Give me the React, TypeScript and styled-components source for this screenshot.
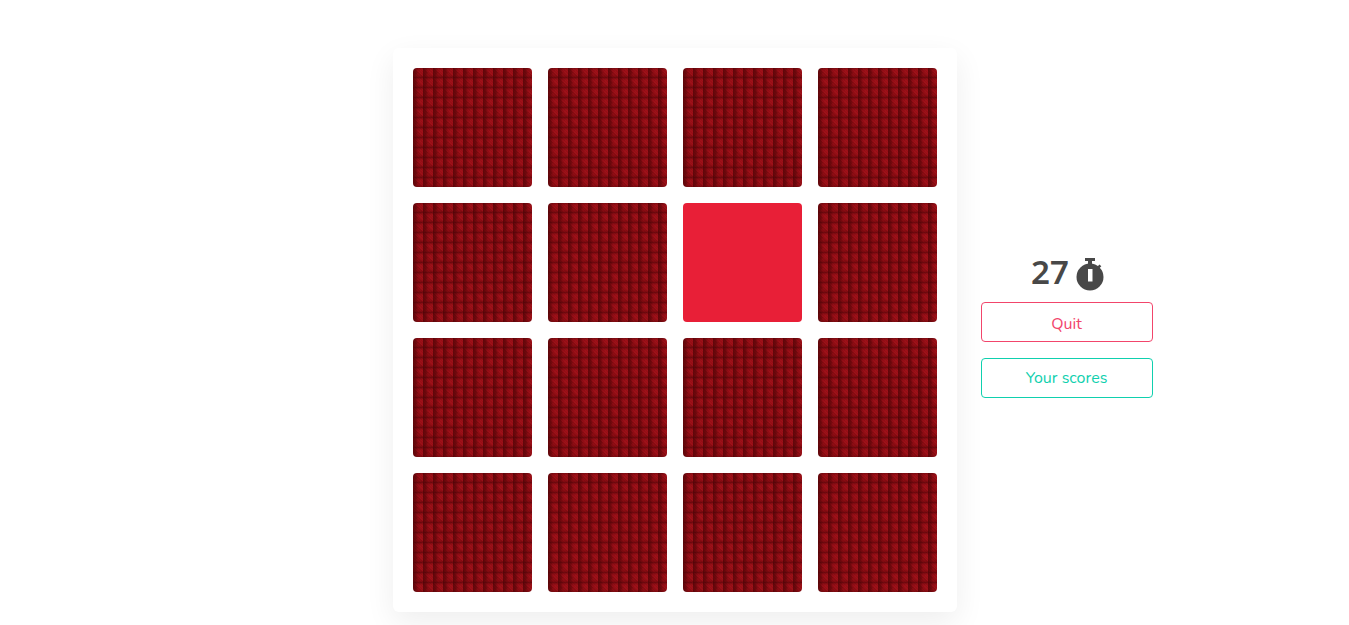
import React from "react";
import styled, { createGlobalStyle } from "styled-components";

const GlobalStyle = createGlobalStyle`
  html, body {
    margin: 0;
    background: #fff;
    font-family: "Nunito", "Noto Sans", "Open Sans", sans-serif;
  }
`;

const Page = styled.main`
  display: flex;
  justify-content: center;
  align-items: flex-start;
  gap: 24px;
  height: 625px;
  padding: 48px 0 13px 196px;
  box-sizing: border-box;
  overflow: hidden;
`;

const Board = styled.section`
  display: grid;
  grid-template-columns: repeat(4, 119px);
  grid-auto-rows: 119px;
  gap: 16px;
  padding: 20px;
  background: #fff;
  border-radius: 6px;
  box-shadow: 0 10px 30px rgba(0, 0, 0, 0.07);
`;

const Card = styled.div<{ $open?: boolean }>`
  border-radius: 4px;
  background-color: ${(p) => (p.$open ? "#e81f37" : "#9a0f17")};
  ${(p) =>
    !p.$open &&
    `
    background-image:
      repeating-linear-gradient(45deg, rgba(60,0,0,.1) 0 1px, transparent 1px 2px),
      linear-gradient(180deg, rgba(45,0,0,.5) 0, rgba(45,0,0,.25) 1px, transparent 3px, transparent 8px, rgba(45,0,0,.2) 10px),
      linear-gradient(90deg, rgba(50,0,0,.4) 0, rgba(50,0,0,.25) 3px, transparent 5px),
      conic-gradient(from 225deg at 50% 50%, rgba(50,0,0,.2) 0 90deg, rgba(120,10,15,.05) 90deg 180deg, rgba(190,30,40,.12) 180deg 270deg, rgba(70,0,0,.12) 270deg 360deg);
    background-size: auto, 10px 10px, 10px 10px, 10px 10px;
    background-position: 0 0, 0 9px, 0 9px, 0 9px;
    `}
`;

const Side = styled.aside`
  display: flex;
  flex-direction: column;
  align-items: stretch;
  align-self: center;
  width: 172px;
  gap: 16px;
  padding-bottom: 8px;
`;

const Timer = styled.div`
  display: flex;
  justify-content: center;
  align-items: center;
  gap: 7px;
  height: 40px;
  margin-bottom: -8px;
  padding-left: 2px;
  font-family: "Noto Sans", "Open Sans", sans-serif;
  font-size: 33px;
  font-weight: 600;
  color: #484848;
`;

const Count = styled.span`
  margin-bottom: 5px;
`;

const Outline = styled.button<{ $color: string; $nudge: number }>`
  height: 40px;
  padding: ${(p) => p.$nudge}px 0 0;
  border: 1px solid ${(p) => p.$color};
  border-radius: 4px;
  background: #fff;
  color: ${(p) => p.$color};
  font-family: inherit;
  font-size: 16px;
`;

const tiles = Array.from({ length: 16 }, (_, i) => i);

export default function App() {
  return (
    <>
      <GlobalStyle />
      <Page>
        <Board>
          {tiles.map((i) => (
            <Card key={i} $open={i === 6} />
          ))}
        </Board>
        <Side>
          <Timer>
            <Count>27</Count>
            <svg width="28" height="33" viewBox="0 0 28 33" fill="#484848">
              <rect x="9" y="0" width="10" height="3" />
              <rect x="12" y="2" width="4" height="6" />
              <path d="M21 9l2.500-2.500 1.800 1.800-2.500 2.500z" />
              <path fillRule="evenodd" d="M14 5.500a13.500 13.500 0 1 0 0 27 13.500 13.500 0 0 0 0-27zM12 11h4.500v12.500h-4.500z" />
            </svg>
          </Timer>
          <Outline $color="#f2456b" $nudge={4}>Quit</Outline>
          <Outline $color="#0fd0ae" $nudge={0}>Your scores</Outline>
        </Side>
      </Page>
    </>
  );
}
